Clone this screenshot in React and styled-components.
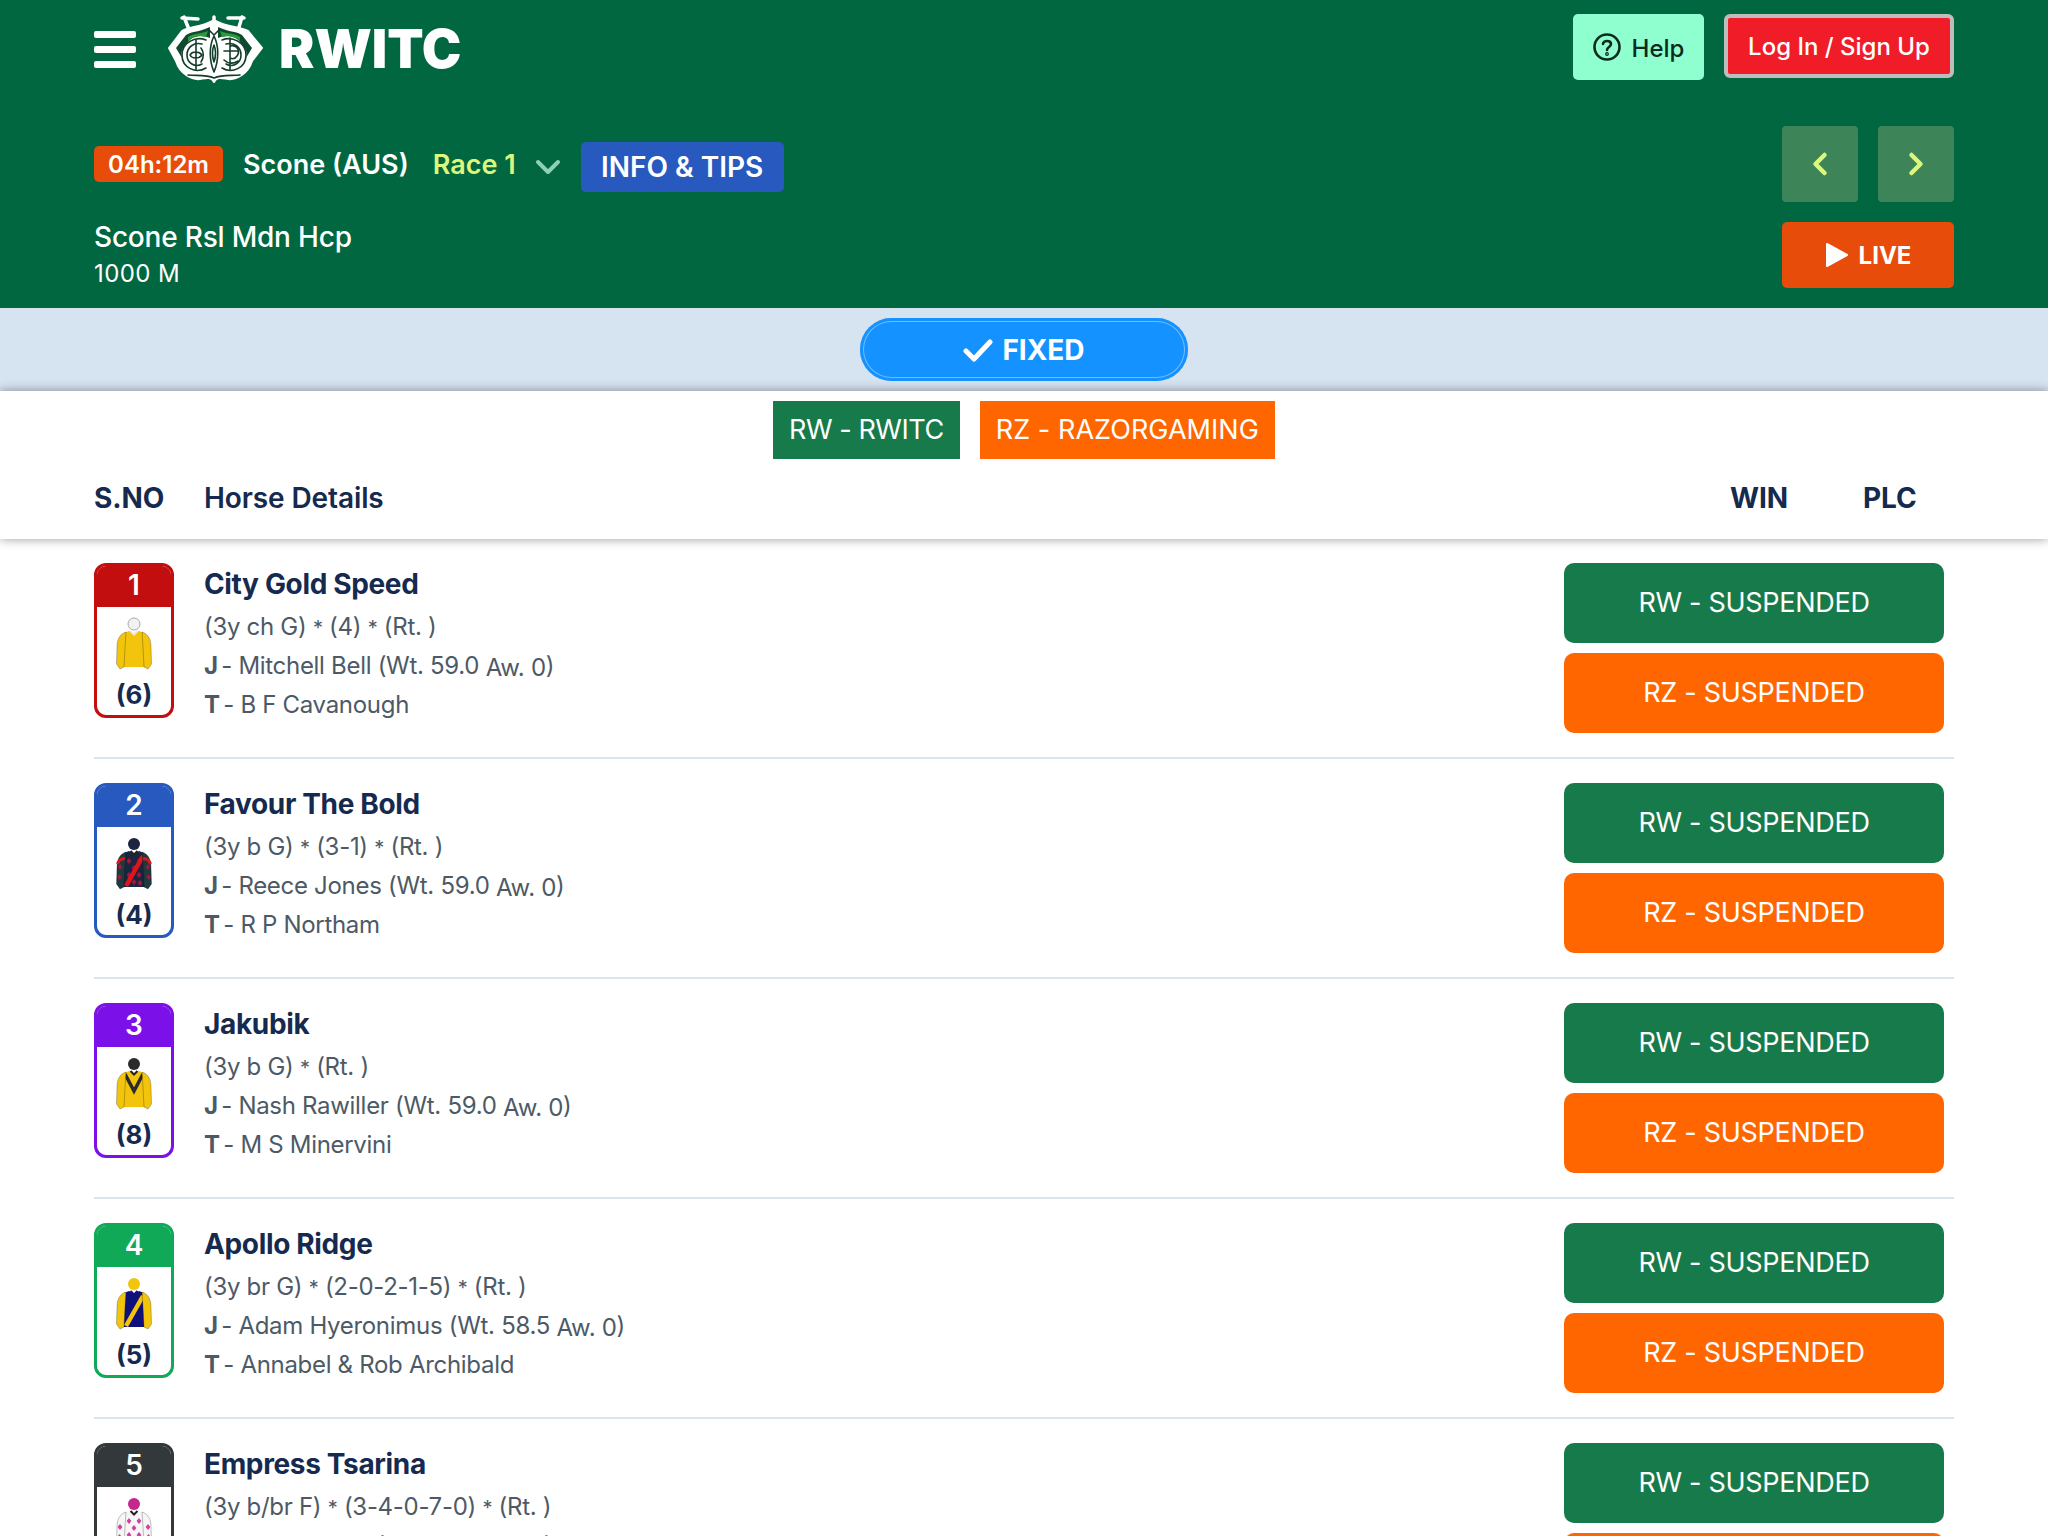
import React from 'react';
import styled, {createGlobalStyle} from 'styled-components';
import {ChevronDown, ChevronLeft, ChevronRight} from 'lucide-react';

const horses = [
  {no: 1, color: '#c20e0e', draw: 6, name: 'City Gold Speed', info: '(3y ch G) * (4) * (Rt. )', jockey: 'Mitchell Bell', wt: '59.0', trainer: 'B F Cavanough', silk: {cap: '#f2f2f2', capLine: '#aaa', body: '#f2c40c', sleeve: '#f2c40c', collar: '#e8e8e8'}},
  {no: 2, color: '#2759bf', draw: 4, name: 'Favour The Bold', info: '(3y b G) * (3-1) * (Rt. )', jockey: 'Reece Jones', wt: '59.0', trainer: 'R P Northam', silk: {cap: '#1c2440', body: '#1c2440', sleeve: '#1c3a40', sash: '#e0141c', dots: '#a0183a', armband: '#e0141c', collar: '#222'}},
  {no: 3, color: '#7b10e8', draw: 8, name: 'Jakubik', info: '(3y b G) * (Rt. )', jockey: 'Nash Rawiller', wt: '59.0', trainer: 'M S Minervini', silk: {cap: '#2b2b2b', body: '#f2c40c', sleeve: '#f2c40c', chevron: '#2b2b2b', collar: '#222'}},
  {no: 4, color: '#0fa958', draw: 5, name: 'Apollo Ridge', info: '(3y br G) * (2-0-2-1-5) * (Rt. )', jockey: 'Adam Hyeronimus', wt: '58.5', trainer: 'Annabel & Rob Archibald', silk: {cap: '#f2c40c', body: '#10107a', sleeve: '#f2c40c', sash: '#f2c40c', collar: '#10107a'}},
  {no: 5, color: '#33383b', draw: 2, name: 'Empress Tsarina', info: '(3y b/br F) * (3-4-0-7-0) * (Rt. )', jockey: 'Rachel King', wt: '59.0', trainer: 'G Waterhouse', silk: {cap: '#c4288c', body: '#f6f6f6', sleeve: '#f6f6f6', dots: '#d0409c', collar: '#222'}},
];

const silkDots = [[13, 24], [23, 24], [18, 31], [13, 38], [23, 38], [18, 45], [4, 30], [32, 30], [3.5, 40], [32.5, 40], [12, 46], [24, 46]];

function Logo() {
  return (
    <svg width="96" height="70" viewBox="0 0 96 70" fill="none" strokeLinecap="round" strokeLinejoin="round">
      <path d="M1 34 L14 17 C22 12 32 14 46 6 C60 14 70 12 80 17 L94 34 L84 47 C80 60 68 66 60 65 C54 64 49 62 46 68 C43 62 38 64 32 65 C24 66 12 60 8 47 Z" fill="#fff" stroke="#fff" strokeWidth="2" />
      <path d="M14 4 L30 5 M16 3 L20 13 M60 4 L76 4 M74 3 L71 13 M46 3 V12" stroke="#fff" strokeWidth="3.5" />
      <path d="M8 34 L18 21 C24 17 32 18 42 13 L42 24 C34 20 24 22 20 28 C16 32 12 36 14 44 Z" fill="#0e4a2e" />
      <path d="M84 34 L74 21 C68 17 60 18 50 13 L50 24 C58 20 68 22 72 28 C76 32 80 36 78 44 Z" fill="#0e4a2e" />
      <path d="M20 23 C26 19 32 20 40 17 L38 23 C30 21 25 23 20 27Z" fill="#2a9a3c" />
      <path d="M72 23 C66 19 60 20 52 17 L54 23 C62 21 67 23 72 27Z" fill="#2a9a3c" />
      <g stroke="#123d2a" strokeWidth="1.6">
        <path d="M38 26 C28 22 14 28 14 41 C14 54 28 60 38 54" />
        <path d="M34 30 C26 28 19 33 19 41 C19 49 27 54 34 50" />
        <path d="M28 26 V56 M22 41 C24 37 31 37 34 41 C31 45 24 45 22 41Z" />
        <path d="M33 34 C36 38 36 44 33 48" />
        <path d="M54 26 C64 22 78 28 78 41 C78 54 64 60 54 54" />
        <path d="M58 30 C66 28 73 33 73 41 C73 49 65 54 58 50" />
        <path d="M62 24 V56 M62 32 C70 30 72 38 69 42 C67 45 64 45 62 44 M56 37 H70" />
        <path d="M56 46 C60 50 66 50 70 47" />
        <path d="M46 22 C41 32 41 46 46 58 C51 46 51 32 46 22Z" />
        <path d="M46 31 C44 36 44 42 46 48 C48 42 48 36 46 31Z" />
        <path d="M20 61 C28 62 38 60 46 64 C54 60 64 62 72 61" />
        <path d="M40 15 L46 21 L52 15" />
      </g>
    </svg>
  );
}

function Silk({cap, capLine, body, sleeve, sash, chevron, dots, armband, collar}) {
  return (
    <svg width="36" height="54" viewBox="0 0 36 54">
      <circle cx="18" cy="7" r="6" fill={cap} stroke={capLine || 'none'} strokeWidth="1" />
      <path d="M13 14 L18 17 L23 14 L28 16 L28 50 L8 50 L8 16 Z" fill={body} />
      {dots && silkDots.slice(0, 6).concat(silkDots.slice(10)).map(([x, y]) => (
        <path key={x + '-' + y} d={`M${x} ${y - 3}l2.4 3l-2.4 3l-2.4 -3Z`} fill={dots} />
      ))}
      {sash && <path d="M27 19 L10 49" stroke={sash} strokeWidth="4.5" />}
      {chevron && <path d="M9 17 L18 34 L27 17" stroke={chevron} strokeWidth="3.5" fill="none" />}
      <path d="M10 15 C4 17 1 22 1 30 L0.5 47 L4 52 L8 50 L9 30 Z M26 15 C32 17 35 22 35 30 L35.5 47 L32 52 L28 50 L27 30 Z" fill={sleeve} stroke="rgba(0,0,0,0.35)" strokeWidth="0.7" />
      {dots && silkDots.slice(6, 10).map(([x, y]) => (
        <path key={x + '-' + y} d={`M${x} ${y - 3}l2.4 3l-2.4 3l-2.4 -3Z`} fill={dots} />
      ))}
      {armband && <path d="M1.5 27 C3 23 6 21 9 22 M34.5 27 C33 23 30 21 27 22" stroke={armband} strokeWidth="3" fill="none" />}
      <path d="M14.5 14 L18 17.5 L21.5 14" stroke={collar} strokeWidth="2" fill="none" />
    </svg>
  );
}

function HorseRow({horse}) {
  const infoParts = horse.info.split('*');
  return (
    <Row>
      <Card color={horse.color}>
        <CardNumber color={horse.color}>{horse.no}</CardNumber>
        <SilkWrap><Silk {...horse.silk} /></SilkWrap>
        <Draw>({horse.draw})</Draw>
      </Card>
      <Details>
        <HorseName>{horse.name}</HorseName>
        <DetailLine>
          {infoParts.map((part, i) => (
            <React.Fragment key={i}>
              {i > 0 && <Star>*</Star>}
              {part}
            </React.Fragment>
          ))}
        </DetailLine>
        <DetailLine><b>J</b> - {horse.jockey} (Wt. {horse.wt} <Aw>Aw. 0</Aw>)</DetailLine>
        <DetailLine><b>T</b> - {horse.trainer}</DetailLine>
      </Details>
      <Odds>
        <OddsButton color="#177a4a">RW - SUSPENDED</OddsButton>
        <OddsButton color="#ff6600">RZ - SUSPENDED</OddsButton>
      </Odds>
    </Row>
  );
}

export default function App() {
  return (
    <Page>
      <GlobalStyle />
      <Header>
        <TopBar>
          <Brand>
            <Burger><i /><i /><i /></Burger>
            <Logo />
            <BrandName>RWITC</BrandName>
          </Brand>
          <TopActions>
            <HelpButton>
              <svg width="28" height="28" viewBox="0 0 28 28" fill="none" stroke="#0c2a1e" strokeWidth="2.6" strokeLinecap="round">
                <circle cx="14" cy="14" r="12.5" />
                <path d="M10 11 C10 7 18 7 18 11 C18 14 14 14 14 17" />
                <circle cx="14" cy="21" r="0.6" />
              </svg>
              <HelpLabel>Help</HelpLabel>
            </HelpButton>
            <LoginButton>Log In / Sign Up</LoginButton>
          </TopActions>
        </TopBar>
        <RaceBar>
          <RaceInfo>
            <Timer>04h:12m</Timer>
            <Venue>Scone (AUS)</Venue>
            <RaceNo>Race 1</RaceNo>
            <ChevronDown size={40} color="#8fd0b8" strokeWidth={2.4} />
            <InfoButton>INFO &amp; TIPS</InfoButton>
          </RaceInfo>
          <NavButtons>
            <NavButton><ChevronLeft size={36} strokeWidth={3} /></NavButton>
            <NavButton><ChevronRight size={36} strokeWidth={3} /></NavButton>
          </NavButtons>
        </RaceBar>
        <TitleBar>
          <div>
            <RaceTitle>Scone Rsl Mdn Hcp</RaceTitle>
            <Distance>1000 M</Distance>
          </div>
          <LiveButton>
            <svg width="24" height="26" viewBox="0 0 24 26"><path d="M2 2 L22 13 L2 24Z" fill="#fff" stroke="#fff" strokeWidth="2" strokeLinejoin="round" /></svg>
            LIVE
          </LiveButton>
        </TitleBar>
      </Header>
      <TabBar>
        <FixedPill>
          <svg width="30" height="24" viewBox="0 0 30 24" fill="none" stroke="#fff" strokeWidth="5" strokeLinecap="round" strokeLinejoin="round"><path d="M3 13 L11 21 L27 4" /></svg>
          FIXED
        </FixedPill>
      </TabBar>
      <TableHead>
        <Legend>
          <LegendChip color="#177a4a" spacing="-0.45px">RW - RWITC</LegendChip>
          <LegendChip color="#ff6600" spacing="0.05px">RZ - RAZORGAMING</LegendChip>
        </Legend>
        <Columns>
          <SnoCol>S.NO</SnoCol>
          <DetailsCol>Horse Details</DetailsCol>
          <WinCol>WIN</WinCol>
          <PlcCol>PLC</PlcCol>
        </Columns>
      </TableHead>
      <Rows>
        {horses.map((horse) => <HorseRow key={horse.no} horse={horse} />)}
      </Rows>
    </Page>
  );
}

const GlobalStyle = createGlobalStyle`
  html, body {
    margin: 0;
    padding: 0;
    background: #fff;
  }
  * {
    box-sizing: border-box;
  }
`;

const Page = styled.div`
  width: 2048px;
  height: 1536px;
  overflow: hidden;
  font-family: Inter, "Liberation Sans", sans-serif;
  color: #152a4e;
`;

const Header = styled.header`
  height: 308px;
  background: #006741;
  padding: 14px 94px 0;
  color: #fff;
`;

const TopBar = styled.div`
  display: flex;
  justify-content: space-between;
  align-items: flex-start;
  height: 112px;
`;

const Brand = styled.div`
  display: flex;
  align-items: center;
`;

const Burger = styled.div`
  display: flex;
  flex-direction: column;
  gap: 8px;
  width: 42px;
  margin-right: 32px;

  i {
    display: block;
    height: 7px;
    background: #fff;
    border-radius: 2px;
  }
`;

const BrandName = styled.div`
  margin-left: 15px;
  font-size: 53px;
  font-weight: 900;
  line-height: 70px;
`;

const TopActions = styled.div`
  display: flex;
  align-items: flex-start;
  gap: 20px;
`;

const HelpButton = styled.div`
  display: flex;
  align-items: center;
  justify-content: center;
  gap: 11px;
  width: 131px;
  height: 66px;
  background: #8fffd0;
  border-radius: 5px;
  color: #0c2a1e;
  font-size: 24px;
  font-weight: 500;
`;

const HelpLabel = styled.span`
  padding-top: 2px;
`;

const LoginButton = styled.div`
  display: flex;
  align-items: center;
  justify-content: center;
  width: 230px;
  height: 64px;
  background: #f01c28;
  border: 4px solid #bdbdbd;
  border-radius: 6px;
  font-size: 24px;
  font-weight: 500;
`;

const RaceBar = styled.div`
  display: flex;
  justify-content: space-between;
  align-items: flex-start;
  height: 96px;
`;

const RaceInfo = styled.div`
  display: flex;
  align-items: center;
  height: 50px;
  margin-top: 16px;
`;

const Timer = styled.div`
  display: flex;
  align-items: center;
  justify-content: center;
  width: 129px;
  height: 36px;
  margin: 0 20px 6px 0;
  background: #e84c0a;
  border-radius: 5px;
  font-size: 24px;
  font-weight: 600;
`;

const Venue = styled.div`
  margin: 0 24px 5px 0;
  font-size: 27px;
  font-weight: 600;
`;

const RaceNo = styled.div`
  margin: 0 12px 5px 0;
  color: #dcf77c;
  font-size: 27px;
  font-weight: 600;
`;

const InfoButton = styled.div`
  display: flex;
  align-items: center;
  justify-content: center;
  width: 203px;
  height: 50px;
  margin-left: 13px;
  background: #2759bf;
  border-radius: 5px;
  font-size: 28px;
  font-weight: 600;
`;

const NavButtons = styled.div`
  display: flex;
  gap: 20px;
`;

const NavButton = styled.div`
  display: flex;
  align-items: center;
  justify-content: center;
  width: 76px;
  height: 76px;
  background: #3d8459;
  border-radius: 4px;
  color: #dcf77c;
`;

const TitleBar = styled.div`
  display: flex;
  justify-content: space-between;
  align-items: flex-start;
`;

const RaceTitle = styled.div`
  margin-top: -1px;
  font-size: 28px;
  font-weight: 500;
  letter-spacing: -0.2px;
  line-height: 32px;
`;

const Distance = styled.div`
  margin-top: 6px;
  font-size: 24px;
  letter-spacing: 0.4px;
  line-height: 30px;
`;

const LiveButton = styled.div`
  display: flex;
  align-items: center;
  justify-content: center;
  gap: 10px;
  width: 172px;
  height: 66px;
  background: #e84c0a;
  border-radius: 5px;
  font-size: 24px;
  font-weight: 700;
`;

const TabBar = styled.div`
  display: flex;
  justify-content: center;
  align-items: center;
  height: 83px;
  background: #d6e3f1;
`;

const FixedPill = styled.div`
  display: flex;
  align-items: center;
  justify-content: center;
  gap: 9px;
  width: 328px;
  height: 63px;
  background: #1492ff;
  border-radius: 32px;
  box-shadow: inset 0 0 0 3px #1492ff, inset 0 0 0 4px rgba(255, 255, 255, 0.4);
  color: #fff;
  font-size: 28px;
  font-weight: 700;
`;

const TableHead = styled.div`
  position: relative;
  height: 148px;
  padding-top: 10px;
  background: #fff;
  box-shadow: 0 0 10px rgba(0, 0, 0, 0.4);
`;

const Legend = styled.div`
  display: flex;
  justify-content: center;
  gap: 20px;
`;

const LegendChip = styled.div`
  display: flex;
  align-items: center;
  padding: 0 16px 2px;
  height: 58px;
  background: ${props => props.color};
  color: #fff;
  font-size: 27px;
  letter-spacing: ${props => props.spacing};
`;

const Columns = styled.div`
  display: flex;
  align-items: center;
  height: 58px;
  margin-top: 10px;
  padding: 0 94px;
  font-size: 28px;
  font-weight: 700;
  letter-spacing: -0.1px;
`;

const SnoCol = styled.div`
  width: 110px;
`;

const DetailsCol = styled.div`
  flex: 1;
  font-weight: 600;
`;

const WinCol = styled.div`
  width: 133px;
`;

const PlcCol = styled.div`
  width: 91px;
`;

const Rows = styled.div`
  padding: 0 94px;
`;

const Row = styled.div`
  display: flex;
  align-items: flex-start;
  gap: 30px;
  height: 220px;
  padding: 24px 10px 24px 0;
  border-bottom: 2px solid #d9e4ef;
`;

const Card = styled.div`
  flex: none;
  display: flex;
  flex-direction: column;
  align-items: center;
  width: 80px;
  height: 155px;
  border: 3px solid ${props => props.color};
  border-radius: 12px;
  overflow: hidden;
`;

const CardNumber = styled.div`
  align-self: stretch;
  height: 41px;
  background: ${props => props.color};
  color: #fff;
  font-size: 28px;
  font-weight: 600;
  line-height: 38px;
  text-align: center;
`;

const SilkWrap = styled.div`
  display: flex;
  height: 54px;
  margin-top: 10px;
`;

const Draw = styled.div`
  margin-top: 9px;
  font-size: 26px;
  font-weight: 700;
  line-height: 30px;
`;

const Details = styled.div`
  flex: 1;
  display: flex;
  flex-direction: column;
`;

const HorseName = styled.div`
  height: 44px;
  font-size: 28px;
  font-weight: 700;
  letter-spacing: -0.35px;
  line-height: 42px;
`;

const DetailLine = styled.div`
  height: 39px;
  color: #4d5a66;
  font-size: 24px;
  letter-spacing: -0.3px;
  line-height: 39px;

  b {
    margin-right: -3px;
    font-weight: 700;
  }
`;

const Star = styled.span`
  font-size: 20px;
`;

const Aw = styled.span`
  position: relative;
  top: 2px;
`;

const Odds = styled.div`
  flex: none;
  display: flex;
  flex-direction: column;
  gap: 10px;
  width: 380px;
`;

const OddsButton = styled.div`
  display: flex;
  align-items: center;
  justify-content: center;
  height: 80px;
  padding-bottom: 2px;
  background: ${props => props.color};
  border-radius: 10px;
  color: #fff;
  font-size: 27px;
  letter-spacing: -0.3px;
`;
